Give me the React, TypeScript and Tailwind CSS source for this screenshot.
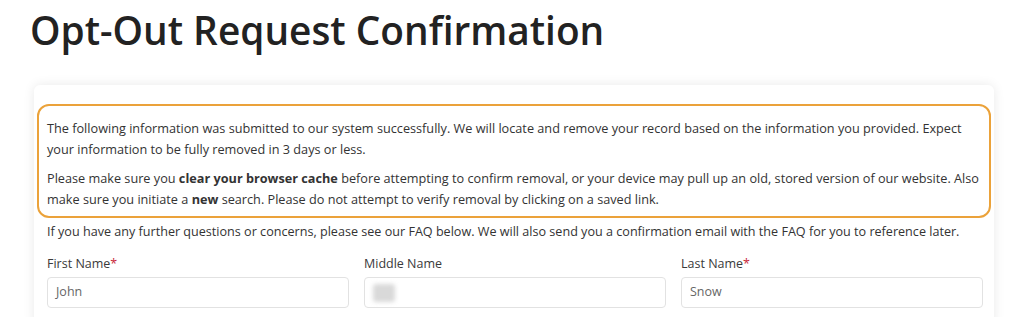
const font = { fontFamily: '"Open Sans", "Noto Sans", sans-serif' };

function Field({ label, required, value, blurred }: { label: string; required?: boolean; value?: string; blurred?: boolean }) {
    return (
        <div className="flex flex-col">
            <label className="text-[12.5px] leading-[18px] text-[#3a3a3a]">
                {label}
                {required && <span className="text-[#c8273a]">*</span>}
            </label>
            <div className="mt-[4px] h-[31px] rounded-[4px] border border-[#e2e2e2] bg-white px-[8px] flex items-center">
                {blurred ? (
                    <div className="h-[18px] w-[22px] rounded-[3px] bg-[#d9d9d9] blur-[2px]" />
                ) : (
                    <span className="text-[12.5px] text-[#666]">{value}</span>
                )}
            </div>
        </div>
    );
}

export default function App() {
    return (
        <div className="min-h-[317px] bg-white pl-[30px] pr-[30px] pt-[2px]" style={font}>
            <h1 className="text-[38.8px] leading-[56px] font-semibold text-[#222]">
                Opt-Out Request Confirmation
            </h1>
            <div className="ml-[4px] mt-[27px] rounded-[6px] bg-white px-[3px] pt-[19px] pb-[20px] shadow-[0_0_12px_rgba(0,0,0,0.09)]">
                <div className="rounded-[12px] border-2 border-[#eba23a] px-[8px] pt-[12px] pb-[6px] text-[12.7px] leading-[21px] text-[#333]">
                    <p className="mb-[8px]">
                        The following information was submitted to our system successfully. We will locate and remove your record based on the information you provided. Expect your information to be fully removed in 3 days or less.
                    </p>
                    <p>
                        Please make sure you <b className="font-bold">clear your browser cache</b> before attempting to confirm removal, or your device may pull up an old, stored version of our website. Also make sure you initiate a <b className="font-bold">new</b> search. Please do not attempt to verify removal by clicking on a saved link.
                    </p>
                </div>
                <div className="pl-[10px] pr-[8px]">
                    <p className="mt-[3px] text-[12.6px] leading-[21px] text-[#333]">
                        If you have any further questions or concerns, please see our FAQ below. We will also send you a confirmation email with the FAQ for you to reference later.
                    </p>
                    <div className="mt-[13px] grid grid-cols-3 gap-x-[15px]">
                        <Field label="First Name" required value="John" />
                        <Field label="Middle Name" blurred />
                        <Field label="Last Name" required value="Snow" />
                    </div>
                </div>
            </div>
        </div>
    );
}
